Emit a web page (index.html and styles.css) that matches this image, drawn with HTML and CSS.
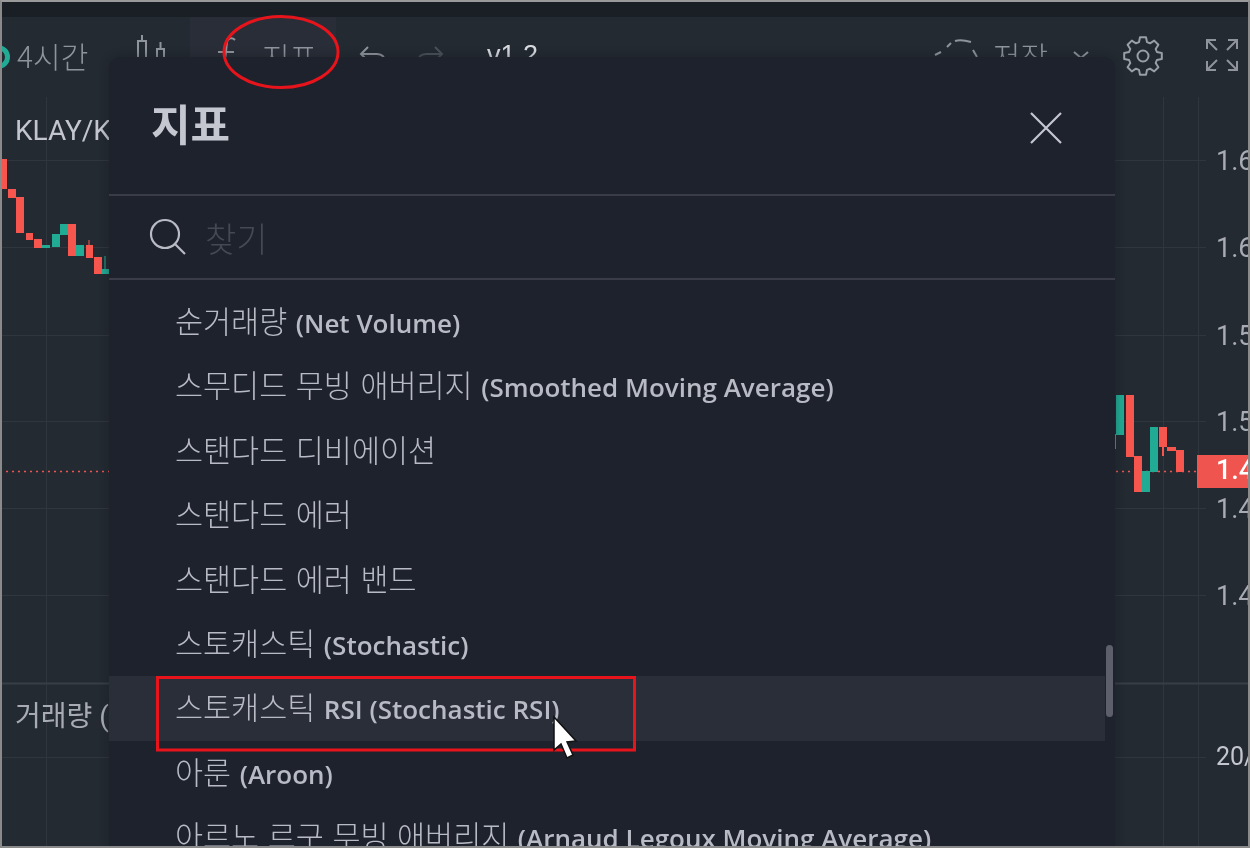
FILE: index.html
```html
<!DOCTYPE html>
<html lang="ko">
<head>
<meta charset="UTF-8">
<title>지표</title>
<link rel="stylesheet" href="styles.css">
</head>
<body>
<div class="frame">
  <div class="topbar"></div>
  <div class="toolbar">
    <span class="status"></span>
    <span class="interval">4시간</span>
    <svg class="ico-candle" width="30" height="30" viewBox="0 0 30 30" fill="none" stroke="#8f949c" stroke-width="2">
      <path d="M1 24V6h8v18M5 6V0M20 24V14h7v10M23.500 14V7"/>
    </svg>
    <div class="tool-active">
      <svg class="ico-f" width="20" height="24" viewBox="0 0 20 24" fill="none" stroke="#8f949c" stroke-width="2"><path d="M18 3C15 0 11 1 10 5L8 24M1 15h16"/></svg>
      <span class="tool-label">지표</span>
    </div>
    <svg class="ico-undo" width="28" height="20" viewBox="0 0 28 20" fill="none" stroke="#8f949c" stroke-width="2"><path d="M9 2 2 9l7 7M2 9h16c5 0 8 3 8 9"/></svg>
    <svg class="ico-redo" width="28" height="20" viewBox="0 0 28 20" fill="none" stroke="#4c5158" stroke-width="2"><path d="M19 2l7 7-7 7M26 9H10c-5 0-8 3-8 9"/></svg>
    <span class="version">v1.2</span>
    <div class="tool-right">
      <svg class="ico-cloud" width="46" height="24" viewBox="0 0 46 24" fill="none" stroke="#8f949c" stroke-width="2"><path d="M1 17 7 14M13 9 17 5M21 3Q27 1 37 4M39 12 43 19"/></svg>
      <span class="save-label">저장</span>
      <svg class="ico-chev" width="18" height="10" viewBox="0 0 18 10" fill="none" stroke="#8f949c" stroke-width="2"><path d="M2 2l7 6 7-6"/></svg>
      <svg class="ico-gear" width="42" height="42" viewBox="0 0 42 42" fill="none" stroke="#9a9ea6" stroke-width="2" stroke-linejoin="round">
        <circle cx="21" cy="21" r="5.500"/>
        <path d="M17 7.100 18 2.200H24L25 7.100 28 8.300 32.200 5.600 36.400 9.800 33.700 14 34.900 17 39.800 18V24L34.900 25 33.700 28 36.400 32.200 32.200 36.400 28 33.700 25 34.900 24 39.800H18L17 34.900 14 33.700 9.800 36.400 5.600 32.200 8.300 28 7.100 25 2.200 24V18L7.100 17 8.300 14 5.600 9.800 9.800 5.600 14 8.300Z"/>
      </svg>
      <svg class="ico-full" width="34" height="34" viewBox="0 0 34 34" fill="none" stroke="#8f949c" stroke-width="2">
        <path d="M2 11V2h9M2 2l10 10M32 11V2h-9M32 2 22 12M2 23v9h9M2 32l10-10M32 23v9h-9M32 32 22 22"/>
      </svg>
    </div>
  </div>

  <div class="chart">
    <svg class="chart-svg" width="1250" height="848" viewBox="0 0 1250 848">
      <g stroke="#30363e" stroke-width="1">
        <path d="M46.500 97V848M1163.500 97V848M1198.500 97V848"/>
        <path d="M0 160.500H1206M0 247.500H1206M0 335.500H1206M0 421.500H1206M0 508.500H1206M0 595.500H1206M0 757.500H1206"/>
        <path d="M0 683.500H1250" stroke="#383e46" stroke-width="2"/>
      </g>
      <path d="M0 471.500H1198" stroke="#f0544f" stroke-width="1.500" stroke-dasharray="2 4"/>
      <path d="M1198 471.500H1206" stroke="#fff" stroke-width="1"/>
      <g fill="#f7564f">
        <path d="M2 159h5v30H2zM8 189h8v9H8zM16 197h8v36h-8zM26 233h7v7h-7zM34 239h8v9h-8zM68 224h8v32h-8zM86 245h7v13h-7zM88.500 240h1v5h-1zM94 257h8v17h-8z"/>
        <path d="M1126 395h8v62h-8zM1134 456h8v36h-8zM1159 427h8v20h-8zM1162 447h2v9h-2zM1167 447h9v4h-9zM1176 450h8v22h-8z"/>
      </g>
      <g fill="#22ab94">
        <path d="M42 245h8v3h-8zM52 234h8v13h-8zM60 224h8v11h-8zM76 245h8v11h-8zM102 269h7v5h-7zM104.500 256h1v13h-1z"/>
        <path d="M1116 395h8v40h-8zM1114 434h2v15h-2zM1142 471h8v21h-8zM1150 427h8v45h-8z"/>
      </g>
    </svg>
    <span class="pair">KLAY/K</span>
    <span class="volume">거래량 (</span>
    <span class="price price-1">1.6</span>
    <span class="price price-2">1.6</span>
    <span class="price price-3">1.5</span>
    <span class="price price-4">1.5</span>
    <span class="price price-5">1.4</span>
    <span class="price price-6">1.4</span>
    <span class="price-tag">1.4</span>
    <span class="price date">20/</span>
  </div>

  <div class="dialog">
    <div class="dialog-head">
      <h2>지표</h2>
      <svg class="ico-close" width="34" height="34" viewBox="0 0 34 34" fill="none" stroke="#c5c7d0" stroke-width="2.200"><path d="M2 2l30 30M32 2 2 32"/></svg>
    </div>
    <div class="search">
      <svg width="38" height="38" viewBox="0 0 38 38" fill="none" stroke="#b8bac4" stroke-width="2.200"><circle cx="16" cy="16" r="14"/><path d="M26 26l10 10"/></svg>
      <span class="placeholder">찾기</span>
    </div>
    <div class="list">
      <div class="row">순거래량 <span class="en">(Net Volume)</span></div>
      <div class="row">스무디드 무빙 애버리지 <span class="en">(Smoothed Moving Average)</span></div>
      <div class="row">스탠다드 디비에이션</div>
      <div class="row">스탠다드 에러</div>
      <div class="row">스탠다드 에러 밴드</div>
      <div class="row">스토캐스틱 <span class="en">(Stochastic)</span></div>
      <div class="row row-hover">스토캐스틱 <span class="en">RSI (Stochastic RSI)</span></div>
      <div class="row">아룬 <span class="en">(Aroon)</span></div>
      <div class="row">아르노 르구 무빙 애버리지 <span class="en">(Arnaud Legoux Moving Average)</span></div>
    </div>
    <div class="scroll-thumb"></div>
  </div>

  <svg class="marks" width="1250" height="848" viewBox="0 0 1250 848" fill="none">
    <ellipse cx="281" cy="52" rx="57" ry="35.500" stroke="#e8141c" stroke-width="3"/>
    <rect x="157.500" y="677.500" width="477" height="72.500" stroke="#e8141c" stroke-width="3"/>
    <path d="M554 717v33l7-6 6 14 6-3-6-13 9-1z" fill="#fff" stroke="#111" stroke-width="1.500"/>
  </svg>
</div>
</body>
</html>
```

FILE: styles.css
```css
* {
  margin: 0;
  padding: 0;
  box-sizing: border-box;
}

html, body {
  width: 1250px;
  height: 848px;
  overflow: hidden;
  background: #232a31;
}

body {
  font-family: "Noto Sans CJK KR", sans-serif;
  color: #b8bac4;
}

.frame {
  position: relative;
  width: 1250px;
  height: 848px;
  overflow: hidden;
  background: #232a31;
  border-top: 2px solid #9a9a9a;
  border-left: 2px solid #8a8a8a;
  border-right: 2px solid #8a8a8a;
  border-bottom: 2px solid #8a8a8a;
  filter: blur(0.45px);
}

.topbar {
  height: 15px;
  background: #1a1f25;
}

.toolbar {
  position: relative;
  display: flex;
  align-items: flex-start;
  height: 80px;
  margin-left: -2px;
  background: #232a31;
  color: #8f949c;
  font-size: 30px;
  font-weight: 300;
  line-height: 40px;
}

.status {
  width: 24px;
  height: 24px;
  margin: 28px 0 0 -14px;
  border: 5px solid #22ab94;
  border-radius: 50%;
  flex: none;
}

.interval {
  margin: 18px 0 0 7px;
  width: 72px;
  flex: none;
  white-space: nowrap;
}

.ico-candle {
  margin: 18px 0 0 48px;
  flex: none;
}

.tool-active {
  display: flex;
  height: 40px;
  width: 146px;
  margin-left: 23px;
  background: #292d37;
  flex: none;
}

.ico-f {
  margin: 20px 0 0 27px;
  flex: none;
}

.tool-label {
  margin-left: 25px;
  line-height: 78px;
}

.ico-undo {
  margin: 28px 0 0 23px;
  flex: none;
}

.ico-redo {
  margin: 28px 0 0 29px;
  flex: none;
}

.version {
  margin: 18px 0 0 43px;
  color: #d8dae0;
  font-family: "Liberation Sans", sans-serif;
  font-size: 27px;
  font-weight: 400;
}

.tool-right {
  display: flex;
  align-items: flex-start;
  margin-left: auto;
}

.ico-cloud {
  margin-top: 21px;
}

.save-label {
  margin: 18px 0 0 13px;
}

.ico-chev {
  margin: 33px 0 0 24px;
}

.ico-gear {
  margin: 18px 0 0 32px;
}

.ico-full {
  margin: 21px 9px 0 41px;
}

.chart {
  position: absolute;
  left: -2px;
  top: -2px;
  width: 1250px;
  height: 848px;
  pointer-events: none;
}

.chart-svg {
  position: absolute;
  left: 0;
  top: 0;
}

.pair, .volume, .price, .price-tag {
  position: absolute;
  font-family: "Roboto", "Noto Sans CJK KR", sans-serif;
  white-space: nowrap;
  line-height: 30px;
}

.pair {
  left: 15px;
  top: 116px;
  font-size: 28px;
  color: #c4c6cf;
}

.volume {
  left: 15px;
  top: 702px;
  font-size: 28px;
  color: #a8abb4;
}

.price {
  left: 1216px;
  font-size: 27px;
  color: #a8abb4;
}

.price-1 { top: 146px; }
.price-2 { top: 233px; }
.price-3 { top: 321px; }
.price-4 { top: 407px; }
.price-5 { top: 494px; }
.price-6 { top: 581px; }

.date {
  top: 742px;
  font-size: 25px;
  color: #c4c6cf;
}

.price-tag {
  left: 1197px;
  top: 455px;
  width: 53px;
  height: 33px;
  padding-left: 19px;
  background: #f0544f;
  color: #fff;
  font-size: 27px;
  font-weight: 500;
}

.dialog {
  position: absolute;
  left: 107px;
  top: 55px;
  width: 1006px;
  height: 800px;
  overflow: hidden;
  background: #1e222d;
  border-radius: 12px 12px 0 0;
  box-shadow: 0 0 10px rgba(20, 24, 30, 0.45);
}

.dialog-head {
  display: flex;
  align-items: flex-start;
  justify-content: space-between;
  height: 139px;
  padding: 38px 52px 0 42px;
  border-bottom: 2px solid #3a3d48;
}

.dialog-head h2 {
  font-size: 43px;
  font-weight: 700;
  line-height: 54px;
  color: #c5c7d0;
}

.ico-close {
  margin-top: 16px;
}

.search {
  display: flex;
  align-items: center;
  gap: 18px;
  height: 84px;
  padding-left: 40px;
  border-bottom: 2px solid #3a3d48;
}

.placeholder {
  font-size: 34px;
  font-weight: 300;
  color: #454953;
}

.list {
  padding-top: 10px;
}

.row {
  height: 64.4px;
  margin-right: 10px;
  padding-left: 66px;
  font-size: 30.5px;
  font-weight: 300;
  line-height: 60px;
  white-space: nowrap;
  color: #b8bac4;
}

.row-hover {
  background: #2a2e39;
}

.en {
  font-family: "Open Sans", sans-serif;
  font-size: 26px;
  font-weight: 600;
}

.scroll-thumb {
  position: absolute;
  left: 997px;
  top: 588px;
  width: 7px;
  height: 72px;
  border-radius: 4px;
  background: #5d606b;
}

.marks {
  position: absolute;
  left: -2px;
  top: -2px;
  pointer-events: none;
}
```
